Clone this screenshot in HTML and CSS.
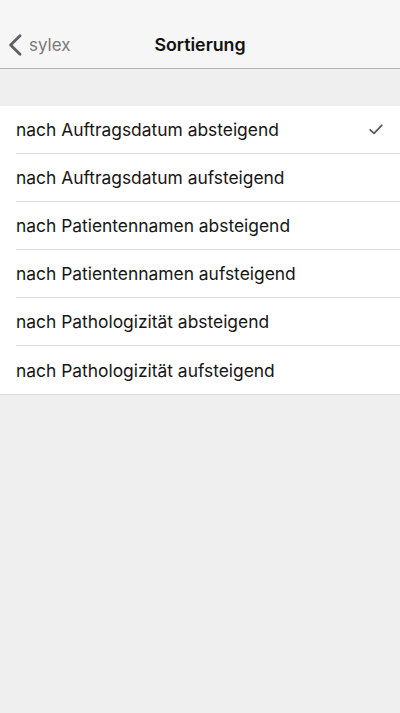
FILE: index.html
```html
<!DOCTYPE html>
<html lang="de">
  <head>
    <meta charset="UTF-8" />
    <meta name="viewport" content="width=device-width, initial-scale=1.0" />
    <title>Sortierung</title>
    <link rel="stylesheet" href="styles.css">
  </head>
  <body>
    <div id="navbar">
      <div class="nav-side">
        <a class="back" href="#">
          <svg class="chevron" width="14" height="22" viewBox="0 0 14 22">
            <path d="M12 1.8 L2.6 11 L12 20.2" fill="none" stroke="#5f5f5f" stroke-width="2.8" stroke-linecap="round" stroke-linejoin="round" />
          </svg>
          <span>sylex</span>
        </a>
      </div>
      <div class="title">Sortierung</div>
      <div class="nav-side"></div>
    </div>

    <div id="spacer"></div>

    <ul id="sortList">
      <li class="row selected">
        <span>nach Auftragsdatum absteigend</span>
        <svg class="check" width="14" height="11" viewBox="0 0 14 11">
          <path d="M1.2 5.8 L5 9.4 L12.8 1.4" fill="none" stroke="#5a5a5a" stroke-width="1.8" stroke-linecap="round" stroke-linejoin="round" />
        </svg>
      </li>
      <li class="row"><span>nach Auftragsdatum aufsteigend</span></li>
      <li class="row"><span>nach Patientennamen absteigend</span></li>
      <li class="row"><span>nach Patientennamen aufsteigend</span></li>
      <li class="row"><span>nach Pathologizität absteigend</span></li>
      <li class="row"><span>nach Pathologizität aufsteigend</span></li>
    </ul>
  </body>
</html>
```

FILE: styles.css
```css
* {
  box-sizing: border-box;
  margin: 0;
  padding: 0;
}
body {
  background-color: #efeff0;
  font-family: Inter, Roboto, "Liberation Sans", sans-serif;
  width: 400px;
  height: 713px;
  overflow: hidden;
}

#navbar {
  display: flex;
  align-items: center;
  height: 69px;
  padding-top: 21px;
  background-color: #f6f6f6;
  border-bottom: 1px solid #b2b2b2;
}
.nav-side {
  flex: 1;
}
.back {
  display: flex;
  align-items: center;
  gap: 7px;
  padding-left: 8px;
  color: #7a7a7a;
  text-decoration: none;
  font-size: 17px;
}
.title {
  font-size: 17.8px;
  font-weight: 600;
  color: #111;
}

#spacer {
  height: 37px;
}

#sortList {
  list-style: none;
  background-color: #fff;
  border-bottom: 1px solid #dcdcdc;
}
.row {
  display: flex;
  align-items: center;
  justify-content: space-between;
  height: 48px;
  margin-left: 16px;
  padding-right: 17px;
  font-size: 17.4px;
  color: #161616;
  border-bottom: 1px solid #dcdcdc;
}
.row:last-child {
  border-bottom: none;
}
```
